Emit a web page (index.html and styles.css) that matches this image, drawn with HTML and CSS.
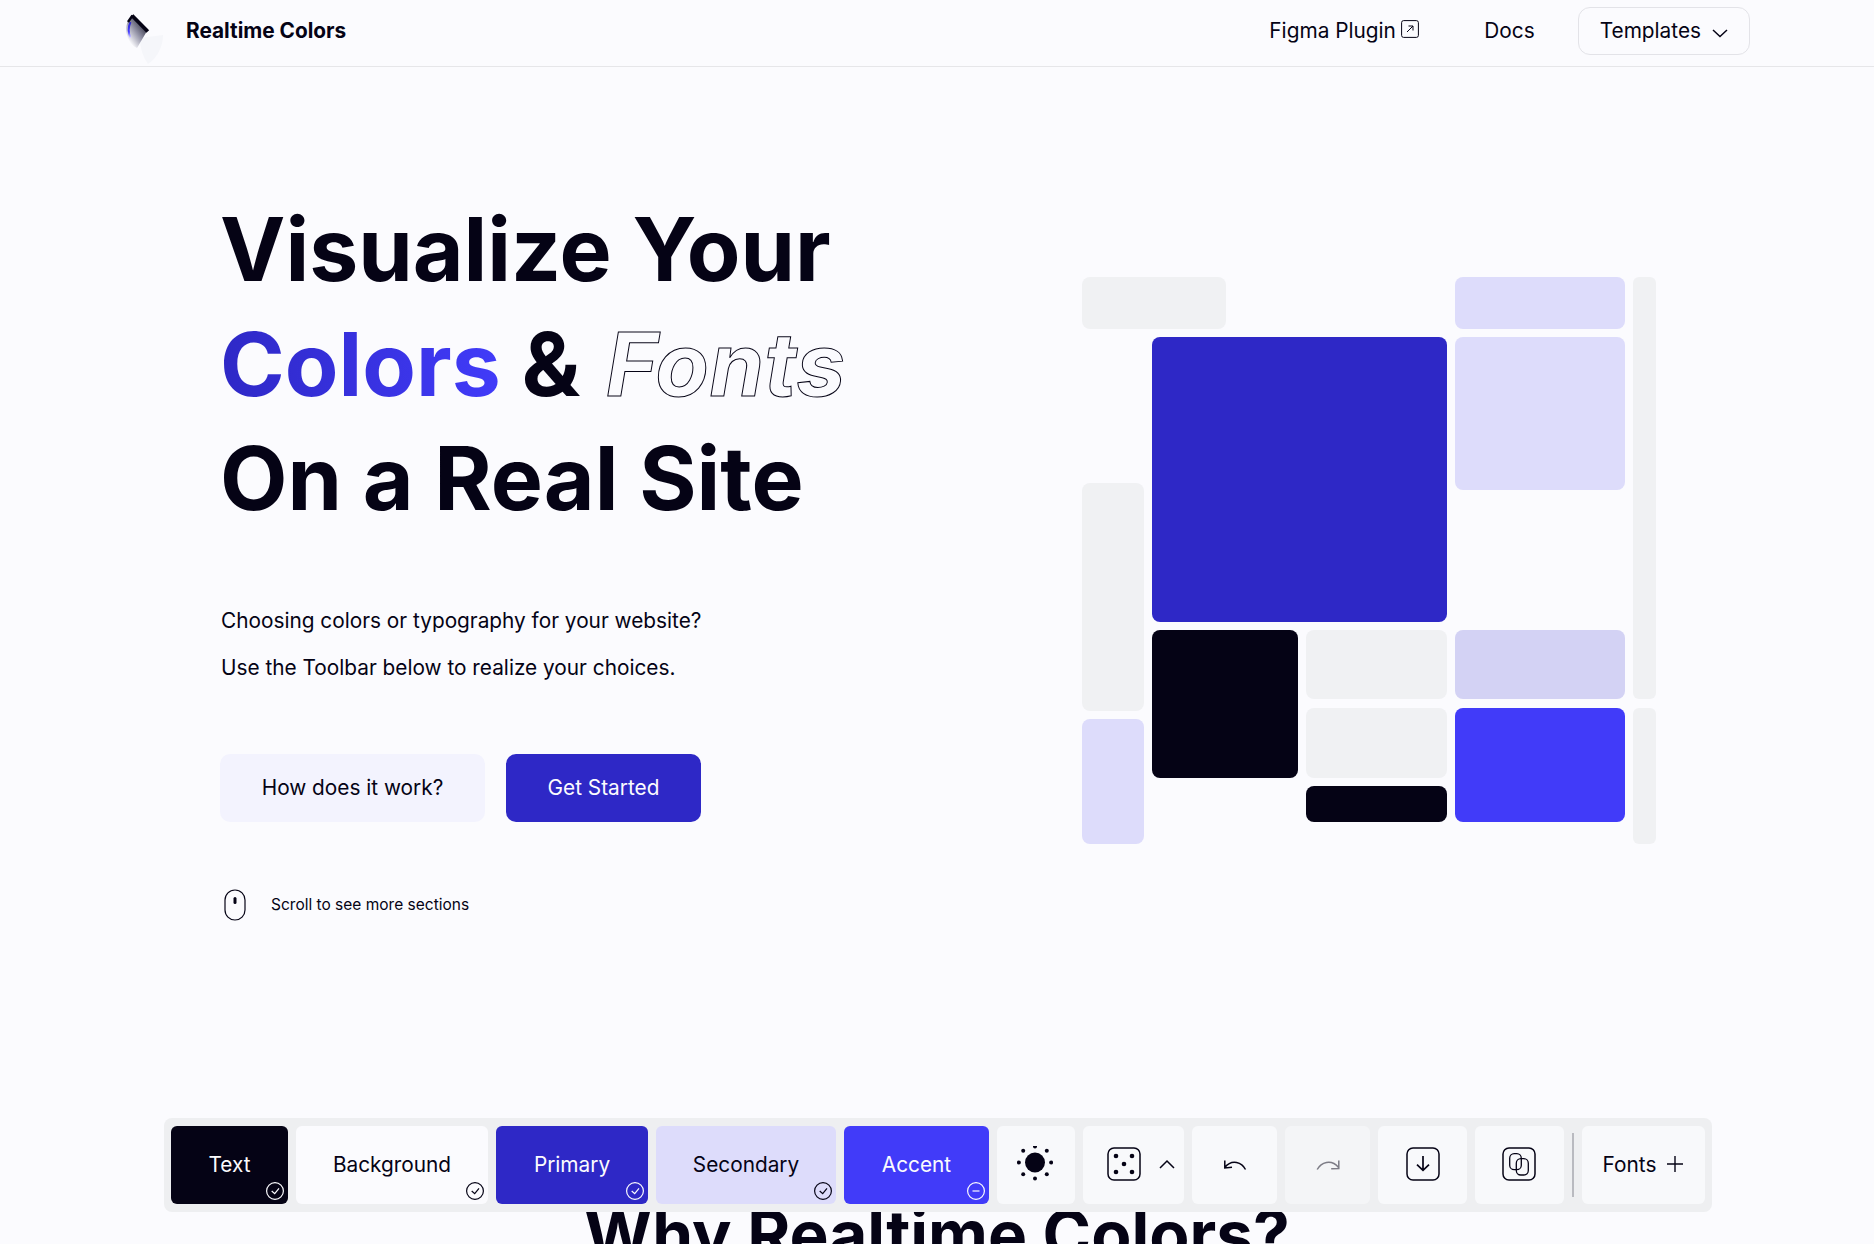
FILE: index.html
```html
<!DOCTYPE html>
<html lang="en">
<head>
  <meta charset="UTF-8" />
  <title>Realtime Colors</title>
  <link rel="stylesheet" href="styles.css">
</head>
<body>
  <header class="navbar">
    <a class="brand" href="#">
      <svg class="brand-logo" viewBox="0 0 60 60" width="60" height="60">
        <defs>
          <linearGradient id="logoFade" x1="0.8" y1="0.15" x2="0.2" y2="0.85">
            <stop offset="0" stop-color="#2a2a3a"/>
            <stop offset="0.5" stop-color="#9090a4"/>
            <stop offset="1" stop-color="#fbfbfe"/>
          </linearGradient>
          <linearGradient id="logoBlue" x1="0" y1="0" x2="0" y2="1">
            <stop offset="0" stop-color="#2f27ce"/>
            <stop offset="0.6" stop-color="#433bff"/>
            <stop offset="1" stop-color="#dedcff"/>
          </linearGradient>
        </defs>
        <path d="M25 33 L48 30 C48 42 42 53 33 59 C28 52 25 43 25 33 Z" fill="#f5f6fa"/>
        <path d="M17.3 10 C11 17 10 24 12 30 C13.5 36 17 41 22 43 L32 26 Z" fill="url(#logoFade)"/>
        <path d="M15.5 17 C13.2 22 13.2 28 15.5 33" fill="none" stroke="url(#logoBlue)" stroke-width="2"/>
        <path d="M17 10.5 L32.8 26.5" fill="none" stroke="#050315" stroke-width="3.8"/>
        <path d="M17.5 10.5 L13 17" fill="none" stroke="#050315" stroke-width="2.4"/>
      </svg>
      <span class="brand-name">Realtime Colors</span>
    </a>
    <nav class="nav-links">
      <a class="nav-link nav-figma" href="#">Figma Plugin
        <svg class="ext-icon" viewBox="0 0 18 18" width="18" height="18"><rect x="0.6" y="0.6" width="16.8" height="16.8" rx="2" fill="none" stroke="#050315" stroke-width="1"/><path d="M6 12 L12 6 M7.5 6 H12 V10.5" fill="none" stroke="#050315" stroke-width="1"/></svg>
      </a>
      <a class="nav-link" href="#">Docs</a>
      <button class="templates-btn">Templates
        <svg viewBox="0 0 16 16" width="16" height="16"><path d="M1 5 L8 11.5 L15 5" fill="none" stroke="#050315" stroke-width="1.5"/></svg>
      </button>
    </nav>
  </header>

  <main class="hero">
    <div class="hero-text">
      <h1 class="hero-title">
        Visualize Your<br>
        <span class="grad">Colors</span> &amp; <span class="outline">Fonts</span><br>
        On a Real Site
      </h1>
      <p class="hero-sub">Choosing colors or typography for your website?</p>
      <p class="hero-sub">Use the Toolbar below to realize your choices.</p>
      <div class="hero-actions">
        <button class="btn btn-secondary">How does it work?</button>
        <button class="btn btn-primary">Get Started</button>
      </div>
      <div class="scroll-hint">
        <svg viewBox="0 0 22 32" width="22" height="32"><rect x="1" y="1" width="20" height="30" rx="10" fill="none" stroke="#050315" stroke-width="1.2"/><rect x="9.5" y="8" width="3" height="7" rx="1.5" fill="#050315"/></svg>
        <span>Scroll to see more sections</span>
      </div>
    </div>

    <div class="mosaic">
      <div class="tile neutral t-top"></div>
      <div class="tile second t-topright"></div>
      <div class="tile neutral t-strip"></div>
      <div class="tile primary t-main"></div>
      <div class="tile second t-side"></div>
      <div class="tile neutral t-left"></div>
      <div class="tile dark t-black"></div>
      <div class="tile neutral t-mid1"></div>
      <div class="tile second2 t-lav"></div>
      <div class="tile neutral t-mid2"></div>
      <div class="tile accent t-accent"></div>
      <div class="tile neutral t-strip2"></div>
      <div class="tile second t-leftlow"></div>
      <div class="tile dark t-small"></div>
    </div>
  </main>

  <h2 class="why-title">Why Realtime Colors?</h2>

  <div class="toolbar">
    <button class="chip chip-text">Text
      <svg class="chip-state" viewBox="0 0 18 18" width="18" height="18"><circle cx="9" cy="9" r="8.4" fill="none" stroke="#fbfbfe"/><path d="M5.7 9 L8.7 11.7 L13 6.3" fill="none" stroke="#fbfbfe"/></svg>
    </button>
    <button class="chip chip-bg">Background
      <svg class="chip-state" viewBox="0 0 18 18" width="18" height="18"><circle cx="9" cy="9" r="8.4" fill="none" stroke="#050315"/><path d="M5.7 9 L8.7 11.7 L13 6.3" fill="none" stroke="#050315"/></svg>
    </button>
    <button class="chip chip-primary">Primary
      <svg class="chip-state" viewBox="0 0 18 18" width="18" height="18"><circle cx="9" cy="9" r="8.4" fill="none" stroke="#fbfbfe"/><path d="M5.7 9 L8.7 11.7 L13 6.3" fill="none" stroke="#fbfbfe"/></svg>
    </button>
    <button class="chip chip-second">Secondary
      <svg class="chip-state" viewBox="0 0 18 18" width="18" height="18"><circle cx="9" cy="9" r="8.4" fill="none" stroke="#050315"/><path d="M5.7 9 L8.7 11.7 L13 6.3" fill="none" stroke="#050315"/></svg>
    </button>
    <button class="chip chip-accent">Accent
      <svg class="chip-state" viewBox="0 0 18 18" width="18" height="18"><circle cx="9" cy="9" r="8.4" fill="none" stroke="#fbfbfe"/><path d="M5.5 9 H12.5" fill="none" stroke="#fbfbfe"/></svg>
    </button>
    <button class="tool tool-sun">
      <svg viewBox="0 1.5 36 36" width="36" height="36">
        <circle cx="18" cy="18" r="10" fill="#050315"/>
        <g fill="#050315">
          <circle cx="18" cy="2" r="2"/><circle cx="18" cy="34" r="2"/>
          <circle cx="1.9" cy="18" r="2"/><circle cx="34.1" cy="18" r="2"/>
          <circle cx="6.2" cy="6.2" r="2"/><circle cx="29.8" cy="6.2" r="2"/>
          <circle cx="6.2" cy="29.8" r="2"/><circle cx="29.8" cy="29.8" r="2"/>
        </g>
      </svg>
    </button>
    <button class="tool tool-dice">
      <svg viewBox="0 0 34 34" width="34" height="34"><rect x="1" y="1" width="32" height="32" rx="6" fill="none" stroke="#050315" stroke-width="1.5"/><g fill="#050315"><circle cx="9" cy="9" r="2.3"/><circle cx="25" cy="9" r="2.3"/><circle cx="17" cy="17" r="2.3"/><circle cx="9" cy="25" r="2.3"/><circle cx="25" cy="25" r="2.3"/></g></svg>
      <svg viewBox="0 0 16 16" width="16" height="16"><path d="M1 12 L8 5 L15 12" fill="none" stroke="#050315" stroke-width="1.5"/></svg>
    </button>
    <button class="tool tool-undo">
      <svg viewBox="0 0 24 24" width="24" height="24"><path d="M22.5 16.5 C19 9.5 9 5.5 1.8 14.5 M1.8 7.5 V15 L9 14.2" fill="none" stroke="#050315" stroke-width="1.5"/></svg>
    </button>
    <button class="tool tool-redo">
      <svg viewBox="0 0 24 24" width="24" height="24"><path d="M1.2 16.5 C5 9.5 15 5.5 22.6 14.5 M22.8 7.5 V15.5 L15.2 15.8" fill="none" stroke="#050315" stroke-width="1.5" opacity="0.5"/></svg>
    </button>
    <button class="tool tool-save">
      <svg viewBox="0 0 34 34" width="34" height="34"><rect x="1" y="1" width="32" height="32" rx="6" fill="none" stroke="#050315" stroke-width="1.5"/><path d="M17 9 V23.3 M11 17.7 L17 23.3 L23 17.7" fill="none" stroke="#050315" stroke-width="1.7"/></svg>
    </button>
    <button class="tool tool-copy">
      <svg viewBox="0 0 34 34" width="34" height="34"><rect x="1" y="1" width="32" height="32" rx="6" fill="none" stroke="#050315" stroke-width="1.5"/><rect x="7.7" y="6.7" width="11.6" height="16" rx="4.5" fill="none" stroke="#050315" stroke-width="1.3"/><rect x="14.3" y="11.7" width="12" height="16.3" rx="4.5" fill="none" stroke="#050315" stroke-width="1.3"/></svg>
    </button>
    <span class="toolbar-sep"></span>
    <button class="tool tool-fonts">Fonts
      <svg viewBox="0 0 18 18" width="18" height="18"><path d="M9 1 V17 M1 9 H17" fill="none" stroke="#050315" stroke-width="1.4"/></svg>
    </button>
  </div>
</body>
</html>
```

FILE: styles.css
```css
* {
  box-sizing: border-box;
}
html, body {
  height: 100%;
}
body {
  margin: 0;
  height: 1244px;
  overflow: hidden;
  position: relative;
  background-color: #fbfbfe;
  color: #050315;
  font-family: Inter, "Liberation Sans", sans-serif;
}
a {
  color: inherit;
  text-decoration: none;
}
button {
  font-family: inherit;
  color: inherit;
  border: none;
  cursor: pointer;
}

/* navbar */
.navbar {
  height: 67px;
  border-bottom: 1px solid #e6e6e9;
  display: flex;
  align-items: center;
  justify-content: space-between;
  padding: 0 124px 5px 115px;
}
.brand {
  display: flex;
  align-items: center;
  gap: 11px;
}
.brand-logo {
  display: block;
  margin-top: 9px;
}
.brand-name {
  font-size: 20.8px;
  font-weight: 700;
}
.nav-links {
  display: flex;
  align-items: center;
  font-size: 20.8px;
}
.nav-link {
  display: flex;
  align-items: center;
  gap: 5.5px;
  margin-right: 43px;
}
.nav-figma {
  margin-right: 65px;
}
.ext-icon {
  margin-top: -4px;
}
.templates-btn {
  display: flex;
  align-items: center;
  gap: 11px;
  height: 48px;
  padding: 0 21px;
  font-size: 20.8px;
  background: transparent;
  border: 1px solid #e3e3e8;
  border-radius: 12px;
}
.templates-btn svg {
  margin-top: 4px;
}

/* hero */
.hero {
  display: flex;
  justify-content: space-between;
  padding: 0 218px 0 220px;
}
.hero-text {
  padding-top: 125px;
}
.hero-title {
  margin: 0 0 71px;
  font-size: 87.6px;
  line-height: 114.5px;
  font-weight: 700;
}
.grad {
  background: linear-gradient(90deg, #2e28c6, #413bf9);
  -webkit-background-clip: text;
  background-clip: text;
  color: transparent;
}
.outline {
  margin-left: 5px;
  letter-spacing: 0.4px;
  font-style: italic;
  color: transparent;
  -webkit-text-stroke: 1px #050315;
}
.hero-sub {
  margin: 0 0 19px;
  padding-left: 1px;
  font-size: 20.8px;
  line-height: 28px;
}
.hero-actions {
  display: flex;
  gap: 21px;
  margin-top: 72px;
}
.btn {
  height: 68px;
  font-size: 20.8px;
  border-radius: 10px;
}
.btn-secondary {
  width: 265px;
  background-color: #f3f3fe;
}
.btn-primary {
  width: 195px;
  background-color: #2e28c6;
  color: #fbfbfe;
}
.scroll-hint {
  display: flex;
  align-items: center;
  gap: 25px;
  margin-top: 67px;
  margin-left: 4px;
  font-size: 15.5px;
}

/* colour mosaic */
.mosaic {
  display: grid;
  margin-top: 210px;
  width: 574px;
  height: 567px;
  grid-template-columns: 62px 8px 74px 72px 8px 141px 8px 170px 8px 23px;
  grid-template-rows: 52px 8px 146px 7px 132px 8px 69px 9px 3px 8px 59px 8px 36px 22px;
}
.tile {
  border-radius: 8px;
}
.neutral { background-color: #f0f1f3; }
.second { background-color: #dddcfb; }
.second2 { background-color: #d3d2f4; }
.primary { background-color: #2e28c6; }
.accent { background-color: #413bf9; }
.dark { background-color: #050315; }
.t-top { grid-column: 1 / 4; grid-row: 1 / 2; }
.t-topright { grid-column: 8 / 9; grid-row: 1 / 2; }
.t-strip { grid-column: 10 / 11; grid-row: 1 / 8; border-radius: 6px; }
.t-main { grid-column: 3 / 7; grid-row: 3 / 6; }
.t-side { grid-column: 8 / 9; grid-row: 3 / 5; }
.t-left { grid-column: 1 / 2; grid-row: 4 / 10; }
.t-black { grid-column: 3 / 5; grid-row: 7 / 12; }
.t-mid1 { grid-column: 6 / 7; grid-row: 7 / 8; }
.t-lav { grid-column: 8 / 9; grid-row: 7 / 8; }
.t-mid2 { grid-column: 6 / 7; grid-row: 9 / 12; }
.t-accent { grid-column: 8 / 9; grid-row: 9 / 14; }
.t-strip2 { grid-column: 10 / 11; grid-row: 9 / 15; border-radius: 6px; }
.t-leftlow { grid-column: 1 / 2; grid-row: 11 / 15; }
.t-small { grid-column: 6 / 7; grid-row: 13 / 14; }

/* section peeking out under the toolbar */
.why-title {
  position: absolute;
  top: 1194px;
  left: 0;
  width: 100%;
  margin: 0;
  text-align: center;
  font-size: 65.7px;
  line-height: 80px;
  font-weight: 700;
}

/* toolbar */
.toolbar {
  position: absolute;
  left: 164px;
  top: 1118px;
  width: 1548px;
  height: 94px;
  display: flex;
  align-items: center;
  gap: 8px;
  padding: 0 7px;
  background-color: #eeeff1;
  border-radius: 8px;
}
.chip, .tool {
  position: relative;
  height: 78px;
  display: flex;
  align-items: center;
  justify-content: center;
  font-size: 20.8px;
  border-radius: 6px;
  padding: 0 0 2px;
}
.chip-text { width: 117px; background-color: #050315; color: #fbfbfe; }
.chip-bg { width: 192px; background-color: #fbfbfe; }
.chip-primary { width: 152px; background-color: #2e28c6; color: #fbfbfe; }
.chip-second { width: 180px; background-color: #dddcfb; }
.chip-accent { width: 145px; background-color: #413bf9; color: #fbfbfe; }
.chip-state {
  position: absolute;
  right: 4px;
  bottom: 4px;
  stroke-width: 1.2;
}
.tool {
  background-color: #f8f9fb;
}
.tool-sun { width: 78px; padding-right: 2px; }
.tool-dice { width: 101px; gap: 18px; justify-content: flex-start; padding-left: 24px; }
.tool-undo { width: 85px; padding: 0; }
.tool-redo { width: 85px; padding: 0; background-color: #f4f5f7; }
.tool-save { width: 89px; }
.tool-copy { width: 89px; padding-right: 2px; }
.toolbar-sep {
  width: 2px;
  height: 64px;
  background-color: #b9bac0;
}
.tool-fonts { width: 123px; gap: 10px; }
```
